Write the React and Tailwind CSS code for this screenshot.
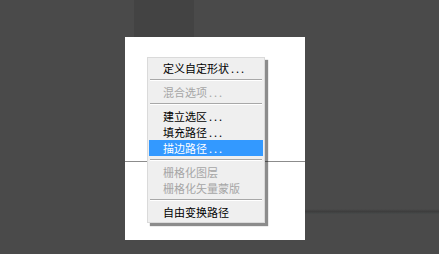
import React from 'react';

const items = [
  { label: '定义自定形状', dots: true },
  { sep: true },
  { label: '混合选项', dots: true, disabled: true },
  { sep: true },
  { label: '建立选区', dots: true },
  { label: '填充路径', dots: true },
  { label: '描边路径', dots: true, active: true },
  { sep: true },
  { label: '栅格化图层', disabled: true },
  { label: '栅格化矢量蒙版', disabled: true },
  { sep: true },
  { label: '自由变换路径' },
];

const MenuItem = ({ item }) => {
  if (item.sep) {
    return (
      <div className="h-[8px] flex flex-col justify-center px-[1px]">
        <div className="border-t border-[#a8a8a8]" />
        <div className="border-t border-white" />
      </div>
    );
  }
  const color = item.active
    ? 'bg-[#3399ff] text-white'
    : item.disabled
    ? 'text-[#a6a6a6]'
    : 'text-black';
  return (
    <div className={`h-[16px] flex items-center pl-[14px] text-[11px] leading-none whitespace-nowrap ${color}`}>
      <span>{item.label}</span>
      {item.dots && <span className="ml-[2px] tracking-[2px]">...</span>}
    </div>
  );
};

export default function App() {
  return (
    <div
      className="relative w-[439px] h-[254px] overflow-hidden bg-[#4a4a4a] pt-[37px] pl-[125px]"
      style={{ fontFamily: '"Noto Sans CJK SC", "Noto Sans", sans-serif' }}
    >
      {/* darker panel strip at top */}
      <div className="absolute left-[134px] top-0 w-[60px] h-[37px] bg-[#434343]" />
      {/* faint band on the right */}
      <div className="absolute left-[305px] top-[209px] w-[134px] h-[5px] bg-gradient-to-b from-[#4a4a4a] via-[#3e3e3e] to-[#474a4a]" />

      {/* canvas */}
      <div className="relative w-[180px] h-[203px] bg-white">
        <div className="absolute left-0 right-0 top-[124px] border-t border-[#8c8c8c]" />

        {/* context menu */}
        <div className="absolute left-[22px] top-[20px] w-[118px] bg-[#efefef] border border-[#dadada] py-[2px] px-[1px] shadow-[3px_3px_1px_rgba(0,0,0,0.45)]">
          {items.map((item, i) => (
            <MenuItem key={i} item={item} />
          ))}
        </div>
      </div>
    </div>
  );
}
